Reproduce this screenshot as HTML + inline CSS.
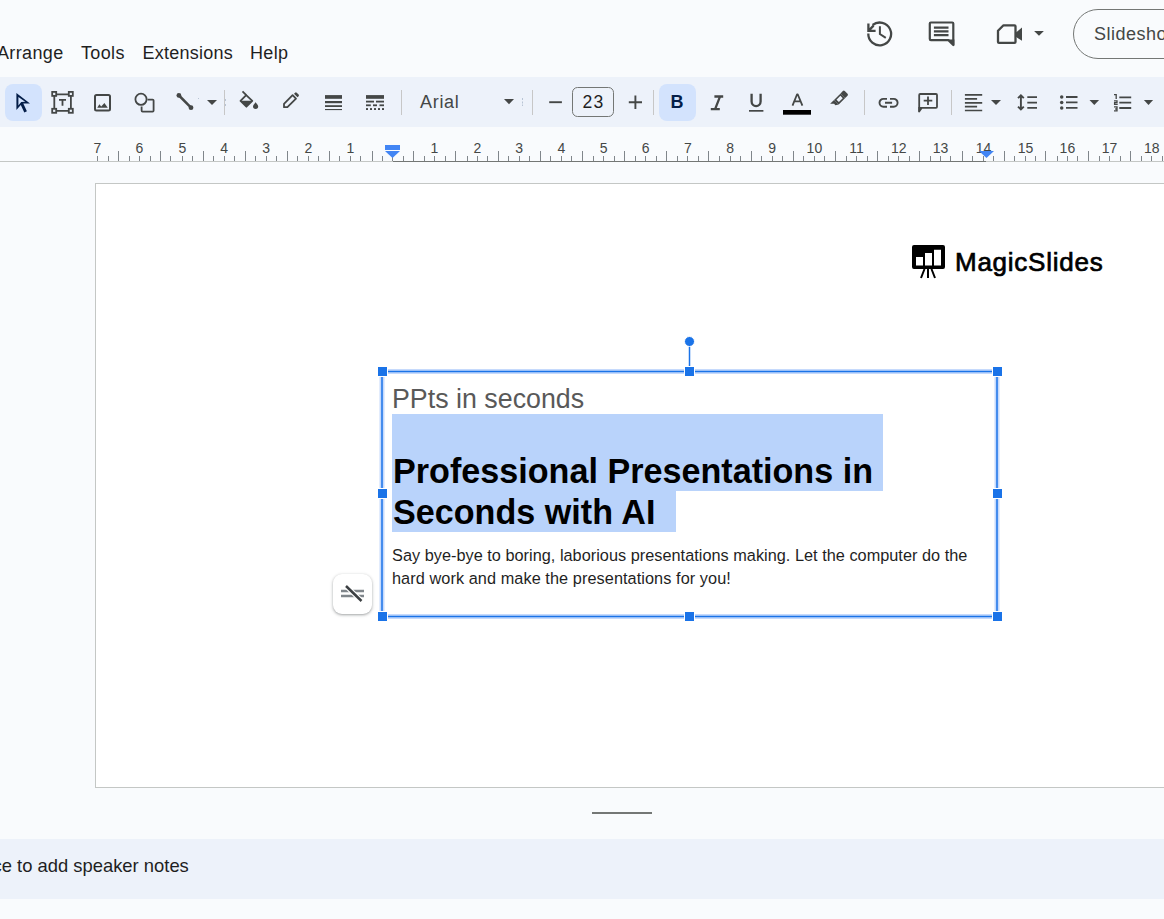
<!DOCTYPE html>
<html><head><meta charset="utf-8">
<style>
*{box-sizing:border-box;margin:0;padding:0}
html,body{width:1164px;height:919px;overflow:hidden;background:#f9fbfd;font-family:"Liberation Sans",sans-serif;position:relative}
.a{position:absolute}
.menu{top:43px;letter-spacing:0.35px;font-size:18px;color:#1f1f1f;white-space:pre;line-height:20px}
#toolbar{left:0;top:77px;width:1164px;height:50px;background:#edf2fa}
.sel{background:#d3e3fd;border-radius:8px}
.sep{width:1px;height:25px;top:90px;background:#c7c7c7}
svg{position:absolute;overflow:visible}
.ic{fill:#444746}
#ruler{left:0;top:127px;width:1164px;height:40px}
#slide{left:95px;top:183px;width:1100px;height:605px;background:#fff;border:1px solid #c4c7c5}
.txt{white-space:pre;position:absolute}
</style></head><body>

<!-- menu -->
<div class="a menu" style="left:-3px">Arrange</div>
<div class="a menu" style="left:81px">Tools</div>
<div class="a menu" style="left:142.5px;letter-spacing:0.25px">Extensions</div>
<div class="a menu" style="left:250px">Help</div>

<!-- toolbar -->
<div id="toolbar" class="a"></div>
<div class="a sel" style="left:5px;top:84px;width:37px;height:37px"></div>
<div class="a sel" style="left:659px;top:84px;width:37px;height:37px"></div>

<!-- toolbar icons -->
<svg class="a" style="left:0;top:0" width="1164" height="919" viewBox="0 0 1164 919">
<g fill="#c7c7c7">
<rect x="224" y="90" width="1" height="25"/>
<rect x="401" y="90" width="1" height="25"/>
<rect x="532" y="90" width="1" height="25"/>
<rect x="653" y="90" width="1" height="25"/>
<rect x="864" y="90" width="1" height="25"/>
<rect x="951" y="90" width="1" height="25"/>
</g>
<!-- tiny marks -->
<g fill="#b8c4d4">
<rect x="198" y="98" width="1" height="1"/>
<rect x="225" y="99" width="1" height="2"/><rect x="225" y="104" width="1" height="2"/>
<rect x="522" y="98" width="1" height="2"/><rect x="522" y="101.5" width="1" height="2"/><rect x="522" y="104.5" width="1" height="1.5"/>
</g>
<!-- select arrow -->
<path fill="#041e49" fill-rule="evenodd" d="M16.4 92.9L30 103.4L23.3 103.6L26.9 111.3L24.3 112.6L20.8 104.9L16.4 109.9ZM18.4 96.9V105.4L21.2 102.1L25.2 101.8Z"/>
<g fill="none" stroke="#444746">
<!-- text box -->
<g stroke-width="1.8">
<rect x="52.2" y="91.9" width="4" height="4"/>
<rect x="68.8" y="91.9" width="4" height="4"/>
<rect x="52.2" y="108.8" width="4" height="4"/>
<rect x="68.8" y="108.8" width="4" height="4"/>
<path d="M56.2 94.3H68.8M56.2 110.9H68.8M54.3 95.9V108.8M70.9 95.9V108.8"/>
<path d="M59 99.8H66M62.5 99.8V105.8"/>
</g>
<!-- image -->
<rect x="95" y="95" width="15" height="15.5" rx="1.5" stroke-width="2"/>
<!-- shapes -->
<circle cx="141" cy="99.3" r="5.6" stroke-width="1.8"/>
<path d="M147.5 99.6H152.6Q153.6 99.6 153.6 100.6V110.6Q153.6 111.6 152.6 111.6H142.6Q141.6 111.6 141.6 110.6V106.6" stroke-width="1.8"/>
<!-- line -->
<path d="M179 95.5L191 107.6" stroke-width="2.5"/>
<!-- pencil -->
<path d="M284 107.2V103.8L292.6 95.2L296 98.6L287.4 107.2Z" stroke-width="1.8" stroke-linejoin="round"/>
<!-- fill bucket -->
<path d="M242.5 91.4L246.3 95.2" stroke-width="1.8"/>
<path d="M246.2 95.1L240.5 100.8L246.4 106.7L252.3 100.8Z" stroke-width="1.8" stroke-linejoin="round"/>
<!-- italic -->
<path d="M714.4 96.5H723.2M710.8 109.2H719.8M719.8 97.2L715.3 108.6" stroke-width="2.3"/>
<!-- underline -->
<path d="M751.6 93.8V101.6A4.2 4.2 0 0 0 760.6 101.6V93.8" stroke-width="2.3"/>
<!-- A -->
<path d="M792.5 105.7L797 94.5H797.8L802.4 105.7M794.2 101.3H800.6" stroke-width="1.8" stroke-linejoin="round"/>
<!-- link -->
<path d="M887 98.9H883.4A3.9 3.9 0 0 0 883.4 106.7H887M890 98.9H893.7A3.9 3.9 0 0 1 893.7 106.7H890M885 102.8H892.1" stroke-width="1.9"/>
<!-- add comment -->
<path d="M919.2 111.5V95Q919.2 94 920.2 94H936Q937 94 937 95V106.8Q937 107.8 936 107.8H921.8Z" stroke-width="1.8" stroke-linejoin="round"/>
<path d="M928 96.4V105M923.7 100.7H932.3" stroke-width="1.8"/>
<!-- align -->
<path d="M964.9 94.9H982.2M964.9 98.8H977.1M964.9 102.8H982.2M964.9 106.6H977.1M964.9 110.5H982.2" stroke-width="1.7"/>
<!-- line spacing -->
<path d="M1020.9 95.8V109M1018 98.2L1020.9 95.3L1023.8 98.2M1018 106.6L1020.9 109.5L1023.8 106.6" stroke-width="1.9"/>
<path d="M1027.3 97.2H1037M1027.3 102.6H1037M1027.3 107.9H1037" stroke-width="1.8"/>
<!-- bullets -->
<path d="M1066 97H1077.5M1066 102.4H1077.5M1066 107.9H1077.5" stroke-width="1.8"/>
<!-- numbered -->
<path d="M1119.3 97.3H1131.2M1119.3 102.6H1131.2M1119.3 108H1131.2" stroke-width="1.8"/>
<!-- minus plus -->
<path d="M549.2 102.2H561.9" stroke-width="1.9"/>
<path d="M628.8 102.2H642M635.4 95.5V108.9" stroke-width="1.9"/>
<!-- history -->
<path d="M868.3 33.5A11.4 11.4 0 1 0 872.6 25" stroke-width="2.3"/><path d="M868.4 23.6V30.8H875.6M868.6 30.6L873.6 25.6" stroke-width="2.3"/>
<path d="M879.9 26.2V34L885.8 37.8" stroke-width="2"/>
<!-- comments -->
<path d="M953.3 45V23.6Q953.3 22.5 952.2 22.5H930.9Q929.8 22.5 929.8 23.6V39Q929.8 40.1 930.9 40.1H948.4Z" stroke-width="2.2" stroke-linejoin="round"/>
<path d="M933.9 27.7H948.5M933.9 31.4H948.5M933.9 35.2H948.5" stroke-width="2.3"/>
<!-- camera -->
<path d="M998 30.8L1003.5 25.3H1014.5Q1015.5 25.3 1015.5 26.3V41.9Q1015.5 42.9 1014.5 42.9H999Q998 42.9 998 41.9Z" stroke-width="2.3" stroke-linejoin="round"/>
</g>
<g fill="#444746">
<!-- image mountains -->
<path d="M97.2 107.8L99.4 104.2L101.2 106.6L104.4 102.9L107.8 107.8Z"/>
<!-- line endpoints -->
<circle cx="178.9" cy="95.4" r="2.4"/><circle cx="191" cy="107.7" r="2.4"/>
<!-- bucket fill lower -->
<path d="M240.5 100.8H252.3L246.4 106.7Z"/>
<!-- drop -->
<path d="M255.6 102.2Q258.2 105.2 258.2 106.3A2.6 2.6 0 0 1 253 106.3Q253 105.2 255.6 102.2Z"/>
<!-- pencil cap -->
<path d="M294 93.8L295.1 92.7Q295.9 91.9 296.7 92.7L298.6 94.6Q299.4 95.4 298.6 96.2L297.5 97.3Z"/>
<!-- underline bar -->
<rect x="749" y="110" width="14.4" height="1.7"/>
<!-- highlighter -->
<g transform="translate(839.3 99.3) rotate(45) scale(0.92)">
<path d="M-3.6 -5.5V-9Q-3.6 -10.5 -2.1 -10.5H2.1Q3.6 -10.5 3.6 -9V-5.5Z"/>
<path fill-rule="evenodd" d="M-3.6 -5.5H3.6V4.5H-3.6ZM-1.8 -3.5V2.5H1.8V-3.5Z"/>
<path d="M-3.6 4.5H3.6L1.5 7.5H-0.5L-3.6 10.5Z"/>
</g>
<!-- line weight -->
<rect x="325" y="95.1" width="17" height="3.7"/>
<rect x="325" y="101" width="17" height="2.2"/>
<rect x="325" y="105.2" width="17" height="1.8"/>
<rect x="325" y="109" width="17" height="1.1"/>
<!-- line dash -->
<rect x="366" y="95.1" width="18" height="3.7"/>
<rect x="366" y="100.7" width="8" height="1.8"/><rect x="376" y="100.7" width="8" height="1.8"/>
<rect x="366" y="104.4" width="4.8" height="1.8"/><rect x="373" y="104.4" width="4" height="1.8"/><rect x="379.5" y="104.4" width="4.5" height="1.8"/>
<rect x="366" y="108.1" width="2" height="1.9"/><rect x="370" y="108.1" width="2" height="1.9"/><rect x="374" y="108.1" width="2" height="1.9"/><rect x="378" y="108.1" width="2" height="1.9"/><rect x="382" y="108.1" width="2" height="1.9"/>
<!-- dropdown arrows -->
<path d="M207 100H217L212 105Z"/>
<path d="M504 99H514L509 104.3Z"/>
<path d="M991 100.1H1001L996 105.1Z"/>
<path d="M1089.5 100H1099.1L1094.3 105Z"/>
<path d="M1143.9 100H1153.1L1148.5 105Z"/>
<path d="M1034.1 31H1043.9L1039 35.7Z"/>
<!-- bullets dots -->
<circle cx="1061.7" cy="97" r="1.75"/><circle cx="1061.7" cy="102.4" r="1.75"/><circle cx="1061.7" cy="107.9" r="1.75"/>
<!-- comment tail -->
<path d="M948 39.5H954.4V45.6Z"/>
<!-- history arrowhead -->

<!-- camera lens -->
<path d="M1015.5 32.8L1022 27.4V40.8L1015.5 36.6Z"/>
<!-- add comment tail -->
<path d="M918.3 107H922.6L918.3 112.2Z"/>
</g>
<!-- color bar -->
<rect x="783" y="110" width="28" height="4.7" fill="#000"/>
<!-- numbers -->
<path d="M1114 94.6H1116.2V98.9M1114 100.9H1117V102.6H1114.6V104.4H1117.7M1114 106.9H1117V109H1115.2M1117 109V110.9H1114" fill="none" stroke="#444746" stroke-width="1.3"/>
<!-- font size box -->
<rect x="572.5" y="87.5" width="41" height="29" rx="5" fill="none" stroke="#747775" stroke-width="1"/>
<!-- slideshow button -->
<rect x="1073.5" y="9.5" width="160" height="49" rx="24.5" fill="none" stroke="#747775" stroke-width="1"/>
</svg>
<div class="a txt" style="left:420px;top:92px;font-size:18px;letter-spacing:0.7px;line-height:20px;color:#444746">Arial</div>
<div class="a txt" style="left:582.5px;top:92px;font-size:17.6px;letter-spacing:1.3px;line-height:20px;color:#1f1f1f">23</div>
<div class="a txt" style="left:670.5px;top:92px;font-size:18px;line-height:20px;font-weight:bold;color:#041e49">B</div>
<div class="a txt" style="left:1094px;top:24px;font-size:18px;letter-spacing:0.5px;line-height:20px;color:#444746">Slideshow</div>

<!-- ruler -->
<svg class="a" style="left:0;top:0" width="1164" height="919" viewBox="0 0 1164 919">
<g fill="#80868b">
<rect x="97" y="156" width="1" height="5"/>
<rect x="108" y="156" width="1" height="5"/>
<rect x="118" y="151" width="1" height="10"/>
<rect x="129" y="156" width="1" height="5"/>
<rect x="139" y="156" width="1" height="5"/>
<rect x="150" y="156" width="1" height="5"/>
<rect x="160" y="151" width="1" height="10"/>
<rect x="170" y="156" width="1" height="5"/>
<rect x="182" y="156" width="1" height="5"/>
<rect x="192" y="156" width="1" height="5"/>
<rect x="203" y="151" width="1" height="10"/>
<rect x="213" y="156" width="1" height="5"/>
<rect x="224" y="156" width="1" height="5"/>
<rect x="234" y="156" width="1" height="5"/>
<rect x="245" y="151" width="1" height="10"/>
<rect x="255" y="156" width="1" height="5"/>
<rect x="266" y="156" width="1" height="5"/>
<rect x="276" y="156" width="1" height="5"/>
<rect x="287" y="151" width="1" height="10"/>
<rect x="297" y="156" width="1" height="5"/>
<rect x="308" y="156" width="1" height="5"/>
<rect x="318" y="156" width="1" height="5"/>
<rect x="329" y="151" width="1" height="10"/>
<rect x="339" y="156" width="1" height="5"/>
<rect x="350" y="156" width="1" height="5"/>
<rect x="360" y="156" width="1" height="5"/>
<rect x="372" y="151" width="1" height="10"/>
<rect x="382" y="156" width="1" height="5"/>
<rect x="392" y="156" width="1" height="5"/>
<rect x="403" y="156" width="1" height="5"/>
<rect x="413" y="151" width="1" height="10"/>
<rect x="424" y="156" width="1" height="5"/>
<rect x="434" y="156" width="1" height="5"/>
<rect x="445" y="156" width="1" height="5"/>
<rect x="455" y="151" width="1" height="10"/>
<rect x="467" y="156" width="1" height="5"/>
<rect x="477" y="156" width="1" height="5"/>
<rect x="487" y="156" width="1" height="5"/>
<rect x="498" y="151" width="1" height="10"/>
<rect x="508" y="156" width="1" height="5"/>
<rect x="519" y="156" width="1" height="5"/>
<rect x="529" y="156" width="1" height="5"/>
<rect x="540" y="151" width="1" height="10"/>
<rect x="550" y="156" width="1" height="5"/>
<rect x="561" y="156" width="1" height="5"/>
<rect x="571" y="156" width="1" height="5"/>
<rect x="582" y="151" width="1" height="10"/>
<rect x="593" y="156" width="1" height="5"/>
<rect x="603" y="156" width="1" height="5"/>
<rect x="614" y="156" width="1" height="5"/>
<rect x="624" y="151" width="1" height="10"/>
<rect x="635" y="156" width="1" height="5"/>
<rect x="645" y="156" width="1" height="5"/>
<rect x="656" y="156" width="1" height="5"/>
<rect x="666" y="151" width="1" height="10"/>
<rect x="677" y="156" width="1" height="5"/>
<rect x="687" y="156" width="1" height="5"/>
<rect x="698" y="156" width="1" height="5"/>
<rect x="708" y="151" width="1" height="10"/>
<rect x="719" y="156" width="1" height="5"/>
<rect x="730" y="156" width="1" height="5"/>
<rect x="740" y="156" width="1" height="5"/>
<rect x="751" y="151" width="1" height="10"/>
<rect x="761" y="156" width="1" height="5"/>
<rect x="772" y="156" width="1" height="5"/>
<rect x="782" y="156" width="1" height="5"/>
<rect x="793" y="151" width="1" height="10"/>
<rect x="803" y="156" width="1" height="5"/>
<rect x="814" y="156" width="1" height="5"/>
<rect x="824" y="156" width="1" height="5"/>
<rect x="835" y="151" width="1" height="10"/>
<rect x="846" y="156" width="1" height="5"/>
<rect x="856" y="156" width="1" height="5"/>
<rect x="867" y="156" width="1" height="5"/>
<rect x="877" y="151" width="1" height="10"/>
<rect x="888" y="156" width="1" height="5"/>
<rect x="898" y="156" width="1" height="5"/>
<rect x="909" y="156" width="1" height="5"/>
<rect x="919" y="151" width="1" height="10"/>
<rect x="930" y="156" width="1" height="5"/>
<rect x="940" y="156" width="1" height="5"/>
<rect x="950" y="156" width="1" height="5"/>
<rect x="962" y="151" width="1" height="10"/>
<rect x="972" y="156" width="1" height="5"/>
<rect x="983" y="156" width="1" height="5"/>
<rect x="993" y="156" width="1" height="5"/>
<rect x="1004" y="151" width="1" height="10"/>
<rect x="1014" y="156" width="1" height="5"/>
<rect x="1025" y="156" width="1" height="5"/>
<rect x="1035" y="156" width="1" height="5"/>
<rect x="1045" y="151" width="1" height="10"/>
<rect x="1057" y="156" width="1" height="5"/>
<rect x="1067" y="156" width="1" height="5"/>
<rect x="1077" y="156" width="1" height="5"/>
<rect x="1088" y="151" width="1" height="10"/>
<rect x="1099" y="156" width="1" height="5"/>
<rect x="1109" y="156" width="1" height="5"/>
<rect x="1120" y="156" width="1" height="5"/>
<rect x="1130" y="151" width="1" height="10"/>
<rect x="1141" y="156" width="1" height="5"/>
<rect x="1151" y="156" width="1" height="5"/>
<rect x="1162" y="156" width="1" height="5"/>
</g>
<rect x="0" y="161" width="393" height="1" fill="#c4c7c5"/>
<rect x="393" y="161" width="593" height="1" fill="#747775"/>
<rect x="986" y="161" width="178" height="1" fill="#c4c7c5"/>
<g font-family="Liberation Sans" font-size="14" fill="#444746" text-anchor="middle">
<text x="97.5" y="153">7</text>
<text x="139.5" y="153">6</text>
<text x="182.5" y="153">5</text>
<text x="224.1" y="153">4</text>
<text x="266.2" y="153">3</text>
<text x="308.4" y="153">2</text>
<text x="350.5" y="153">1</text>
<text x="434.5" y="153">1</text>
<text x="477.5" y="153">2</text>
<text x="519.2" y="153">3</text>
<text x="561.4" y="153">4</text>
<text x="603.6" y="153">5</text>
<text x="645.7" y="153">6</text>
<text x="687.9" y="153">7</text>
<text x="730.1" y="153">8</text>
<text x="772.2" y="153">9</text>
<text x="814.4" y="153">10</text>
<text x="856.6" y="153">11</text>
<text x="898.7" y="153">12</text>
<text x="940.5" y="153">13</text>
<text x="983.5" y="153">14</text>
<text x="1025.5" y="153">15</text>
<text x="1067.4" y="153">16</text>
<text x="1109.5" y="153">17</text>
<text x="1151.7" y="153">18</text>
</g>
<rect x="385" y="145" width="15" height="5" fill="#4285f4"/>
<path d="M385 151H400L392.5 158Z" fill="#4285f4"/>
<path d="M979 151H994L986.5 158Z" fill="#4285f4"/>
</svg>

<!-- slide -->
<div id="slide" class="a"></div>

<!-- slide content -->
<div class="a" style="left:392px;top:414px;width:491px;height:77px;background:#b9d3fb"></div>
<div class="a" style="left:392px;top:491px;width:284px;height:41px;background:#b9d3fb"></div>
<div class="a txt" style="left:392px;top:383px;font-size:26.8px;line-height:32px;color:#595959">PPts in seconds</div>
<div class="a txt" style="left:393px;top:451px;font-size:34.15px;line-height:40px;font-weight:bold;color:#000">Professional Presentations in</div>
<div class="a txt" style="left:393px;top:492px;font-size:34.15px;line-height:40px;font-weight:bold;color:#000">Seconds with AI</div>
<div class="a txt" style="left:392px;top:543.5px;font-size:16.3px;letter-spacing:0.02px;line-height:23.1px;color:#1f1f1f">Say bye-bye to boring, laborious presentations making. Let the computer do the</div>
<div class="a txt" style="left:392px;top:566.6px;font-size:16.3px;letter-spacing:0.07px;line-height:23.1px;color:#1f1f1f">hard work and make the presentations for you!</div>

<!-- logo -->
<svg class="a" style="left:0;top:0" width="1164" height="919" viewBox="0 0 1164 919">
<path fill="#000" fill-rule="evenodd" d="M914 245H943Q945 245 945 247V267Q945 269 943 269H914Q912 269 912 267V247Q912 245 914 245ZM916 257V265.5H923V257ZM925 253V265.5H932V253ZM934 249.7V265.5H941V249.7Z"/>
<path stroke="#000" stroke-width="2" d="M924.5 269L921 278M928 269V278M931.5 269L935 278"/>
</svg>
<div class="a txt" style="left:955px;top:247px;font-size:26px;line-height:30px;-webkit-text-stroke:0.7px #000;letter-spacing:0.75px;color:#000">MagicSlides</div>

<!-- selection box -->
<svg class="a" style="left:0;top:0" width="1164" height="919" viewBox="0 0 1164 919">
<g fill="none" stroke="#c6dafc" stroke-width="5">
<path d="M382 371.5H997M382 616.5H997M382 371V616M997 371V616"/>
</g>
<g fill="none" stroke="#1a73e8" stroke-width="1.5">
<path d="M382 371.5H997M382 616.5H997M382 371V616M997 371V616"/>
<path d="M689.5 341V367"/>
</g>
<g fill="#1a73e8" stroke="#fff" stroke-width="1">
<rect x="377.5" y="366.5" width="10" height="10"/>
<rect x="684.5" y="366.5" width="10" height="10"/>
<rect x="992.5" y="366.5" width="10" height="10"/>
<rect x="377.5" y="488.5" width="10" height="10"/>
<rect x="992.5" y="488.5" width="10" height="10"/>
<rect x="377.5" y="611.5" width="10" height="10"/>
<rect x="684.5" y="611.5" width="10" height="10"/>
<rect x="992.5" y="611.5" width="10" height="10"/>
<circle cx="689.5" cy="341.5" r="5"/>
</g>
</svg>

<!-- floating button -->
<div class="a" style="left:333px;top:574px;width:39px;height:40px;background:#fff;border-radius:9px;box-shadow:0 1px 2px rgba(60,64,67,.3),0 1px 3px 1px rgba(60,64,67,.15)"></div>
<svg class="a" style="left:0;top:0" width="1164" height="919" viewBox="0 0 1164 919">
<path d="M341 591H364M341 596H364" stroke="#80868b" stroke-width="2.5"/>
<path d="M346 586L361.5 601" stroke="#fff" stroke-width="5"/>
<path d="M346 586L361.5 601" stroke="#3c4043" stroke-width="2.5"/>
</svg>

<!-- notes -->
<div class="a" style="left:0;top:839px;width:1164px;height:60px;background:#edf2fa"></div>
<div class="a txt" style="left:-7.5px;top:856px;font-size:18.4px;line-height:20px;color:#1f1f1f">ce to add speaker notes</div>
<div class="a" style="left:592px;top:812px;width:60px;height:2px;background:#747775"></div>

</body></html>
